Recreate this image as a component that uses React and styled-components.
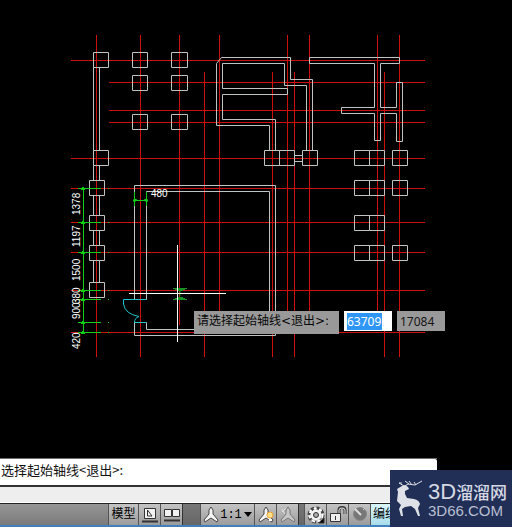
import React from 'react';
import styled, { createGlobalStyle, css } from 'styled-components';

const GlobalStyle = createGlobalStyle`
  * { box-sizing: border-box; }
  body { margin: 0; background: #000; }
`;

const Page = styled.main`
  position: relative;
  display: flex;
  flex-direction: column;
  min-height: 100vh;
  overflow: hidden;
  background: #000;
  font-family: "Noto Sans", "Noto Sans CJK SC", sans-serif;
`;

const Canvas = styled.section`
  position: relative;
  flex: 1;
`;

const Drawing = styled.svg`
  display: block;
  fill: none;
`;

const Axes = styled.path`
  stroke: #cc100d;
`;

const Walls = styled.path`
  stroke: #bfc3c1;
`;

const Dimension = styled.path`
  stroke: #12cf16;
`;

const Mark = styled.path`
  stroke: ${(p) => p.$color};
  fill: ${(p) => p.$fill || 'none'};
`;

const Crosshair = styled.path`
  stroke: #fff;
`;

const DimText = styled.text`
  fill: #fff;
  font: 10px "Liberation Sans Narrow", "Liberation Sans", sans-serif;
`;

const Prompt = styled.form`
  position: absolute;
  left: 194px;
  top: 311px;
  display: flex;
  align-items: flex-start;
  gap: 5px;
`;

const PromptLabel = styled.label`
  width: 145px;
  height: 23px;
  padding-left: 3px;
  background: #999;
  color: #080808;
  font: 12px/20px "DejaVu Sans", "Noto Sans CJK SC", sans-serif;
  white-space: nowrap;
`;

const CoordField = styled.div`
  display: flex;
  align-items: center;
  width: 48px;
  height: 20px;
  padding: 0 3px;
  background: ${(p) => (p.$active ? '#fff' : '#999')};
`;

const CoordInput = styled.input`
  width: ${(p) => (p.$active ? '35px' : '40px')};
  height: 17px;
  padding: 0;
  border: 0;
  outline: 0;
  background: ${(p) => (p.$active ? '#3096f5' : 'transparent')};
  color: ${(p) => (p.$active ? '#fff' : '#161616')};
  font: 12px/17px "Noto Sans", sans-serif;
`;

const CommandPanel = styled.section`
  width: 86%;
  max-width: 437px;
  border-top: 1px solid #6d6d6d;
`;

const CommandLine = styled.input`
  display: block;
  width: 100%;
  height: 26px;
  padding: 0 1px 5px;
  border: 0;
  outline: 0;
  border-radius: 0 2px 0 0;
  background: #fff;
  color: #111;
  font: 13px "Noto Sans CJK SC", sans-serif;
`;

const CommandStrip = styled.div`
  height: 18px;
  border-top: 2px solid #333;
  border-bottom: 1px solid #fff;
  background: #eee;
`;

const StatusBar = styled.nav`
  display: flex;
  height: 24px;
  padding-left: 108px;
  border-top: 1px solid #222;
  border-bottom: 2px solid #3f80bd;
  background: linear-gradient(#969696, #7a7a7a);
`;

const StatusGap = styled.span`
  width: ${(p) => p.$w}px;
  border-left: 1px solid #333;
  background: linear-gradient(#777, #666);
`;

const StatusButton = styled.button`
  display: flex;
  align-items: center;
  justify-content: center;
  flex: none;
  width: ${(p) => p.$w || 22}px;
  padding: 0;
  border: 0;
  border-left: 1px solid #555;
  background: linear-gradient(#c4c4c4, #9b9b9b);
  color: #000;
  font: 12px/20px "Liberation Mono", "Noto Sans CJK SC", monospace;
  white-space: nowrap;
  ${(p) => p.$lit && css`
    justify-content: flex-start;
    padding-left: 2px;
    overflow: hidden;
    background: linear-gradient(#d9f6fd, #a8dcea);
  `}
`;

const Brand = styled.aside`
  position: absolute;
  right: 0;
  bottom: 0;
  display: flex;
  align-items: center;
  width: 122px;
  height: 57px;
  padding-left: 6px;
  gap: 5px;
  background: #212f57;
  color: #d6d9e4;
`;

const BrandText = styled.div`
  display: flex;
  flex-direction: column;
  padding-top: 2px;
  white-space: nowrap;
`;

const BrandName = styled.div`
  display: flex;
  align-items: center;
  height: 22px;
  font: 500 17px/22px "Noto Sans CJK SC", sans-serif;
`;

const BrandLatin = styled.span`
  font: 22px/22px "Liberation Sans", sans-serif;
`;

const BrandSite = styled.div`
  font: 15px/16px "Liberation Sans", sans-serif;
  color: #b9bfd0;
`;

const longX = [96, 140, 399];
const shortX = [179, 219, 287, 309, 377];
const lowX = [204, 272, 294, 384];
const wideY = [60, 158, 188, 222, 252, 290, 332];
const innerY = [82, 110, 122];

const axes = [
  ...longX.map((x) => `M${x}.5 35V357`),
  ...shortX.map((x) => `M${x}.5 35V325`),
  ...lowX.map((x) => `M${x}.5 72V357`),
  ...wideY.map((y) => `M71 ${y}.5H425`),
  ...innerY.map((y) => `M109 ${y}.5H425`),
].join('');

const columns = [
  [93, 52], [132, 52], [171, 52], [132, 75], [171, 75], [132, 114], [171, 114],
  [93, 150], [89, 180], [89, 215], [89, 245], [89, 282],
  [264, 150], [279, 150], [302, 150],
  [354, 150], [369, 150], [392, 150], [354, 180], [369, 180], [392, 180],
  [354, 215], [369, 215], [354, 245], [369, 245], [392, 245],
].map(([x, y]) => `M${x} ${y}h${x === 171 ? 16 : 15}v15h-${x === 171 ? 16 : 15}z`).join('');

const leftWall = [[67, 150], [165, 180], [195, 215], [230, 245], [260, 282]]
  .map(([a, b]) => `M93 ${a}V${b}M99 ${a}V${b}`).join('');

const upperWalls =
  'M269 150V125H216V63L221 57H290V79H312V150' +
  'M275 150V119H222V94H287V88H222V63H284V85H306V150' +
  'M294 155H302M294 161H302' +
  'M374 63H309V57H399V63H380V107H396V82H402V141H396V113H380V140H374V113H341V107H374Z';

const room = 'M134 299V185H275V335H134V322H146V329H269V191H146V299H134';

const dimY = [188, 222, 252, 290, 299, 322, 332];
const dims = 'M83.5 187V333' +
  dimY.map((y) => `M78 ${y}.5H101M108 ${y}.5h1M82 ${y - 1}.5h2M81 ${y + 1}.5h4`).join('') +
  'M133 200.5H148M134.5 192V206M146.5 192V206';

const dimLabels = [
  ['1378', 215], ['1197', 247], ['1500', 281], ['380', 304], ['900', 319], ['420', 349],
];

const Icon = ({ children }) => (
  <svg width="18" height="18" viewBox="0 0 18 18" fill="none" stroke="#333" aria-hidden="true">{children}</svg>
);

const Person = ({ dim }) => (
  <path
    d="M9 1L7 4V8L2 14L3 16L9 12L15 16L16 14L11 8V4Z"
    fill={dim ? '#c8c8c8' : '#f5f5f5'}
    stroke={dim ? '#777' : '#444'}
  />
);

const Deer = () => (
  <svg width="27" height="38" viewBox="0 0 27 38" fill="#dfe1e8" aria-hidden="true">
    <path d="M1 9L6 6L9 5L12 7L13 9L9 11L9 14L11 18L18 19Q23 20 24 24L22 28L24 36H22L19 29L15 26L9 27L6 29L7 36H5L3 29L5 25L1 21L2 12Z" />
    <path d="M8 6L3 3L6 3M9 6L12 4L19 5L26 1M13 4L9 1M16 5L13 1M20 5L18 2" fill="none" stroke="#dfe1e8" />
  </svg>
);

function PlanDrawing() {
  return (
    <Drawing width="440" height="365" viewBox="0 0 440 365" role="img" aria-label="平面图">
      <Axes d={axes} />
      <g transform="translate(.5 .5)">
        <Walls d={columns + leftWall + upperWalls + room} />
      </g>
      <Dimension d={dims} />
      <Mark $color="#12cf16" $fill="#12cf16" d="M134 199l3 1-3 2zM147 199l-3 1 3 2z" />
      <Mark $color="#20c4cc" d="M146 299.5H123.5V304Q125 314 139 316.5Q134.5 318 134.5 322.5H146" />
      <Mark $color="#169526" d="M173 288.5H187M175 289.5H185M177 290.5H183M180 291V296M177 297.500H183M175 298.500H185M173 299.500H187" />
      <Crosshair d="M177.5 245V342M129 293.5H226" />
      {dimLabels.map(([t, y]) => (
        <DimText key={t} transform={`translate(80 ${y}) rotate(-90)`}>{t}</DimText>
      ))}
      <DimText x="151" y="197">480</DimText>
    </Drawing>
  );
}

export default function App() {
  return (
    <Page>
      <GlobalStyle />
      <Canvas>
        <PlanDrawing />
        <Prompt>
          <PromptLabel htmlFor="coord-x">请选择起始轴线&lt;退出&gt;:</PromptLabel>
          <CoordField $active>
            <CoordInput id="coord-x" $active defaultValue="63709" />
          </CoordField>
          <CoordField>
            <CoordInput aria-label="Y" defaultValue="17084" />
          </CoordField>
        </Prompt>
      </Canvas>
      <CommandPanel>
        <CommandLine aria-label="命令行" defaultValue="选择起始轴线<退出>:" />
        <CommandStrip />
        <StatusBar>
          <StatusButton $w={30}>模型</StatusButton>
          <StatusButton aria-label="模型空间">
            <Icon><path d="M3.5 2.5h11v10h-11z" fill="#f2f2f2" /><path d="M6.5 4v6H11Z" /><path d="M1 15.5h16" strokeWidth="2" /></Icon>
          </StatusButton>
          <StatusButton aria-label="布局">
            <Icon><path d="M1.5 3.5h7v7h-7zM9.5 3.5h7v7h-7z" fill="#f2f2f2" /><path d="M1 14.5h16" strokeWidth="2" /></Icon>
          </StatusButton>
          <StatusGap $w={18} />
          <StatusButton $w={54}>
            <Icon><Person /></Icon>
            1:1
            <svg width="11" height="8" viewBox="0 0 11 8" aria-hidden="true"><path d="M2 1h8L6 6z" /></svg>
          </StatusButton>
          <StatusButton aria-label="注释可见性">
            <Icon><Person /><circle cx="13" cy="9" r="3" fill="#ffdf8a" stroke="#eda532" /><path d="M12 14h3" stroke="#fff" strokeWidth="2" /></Icon>
          </StatusButton>
          <StatusButton aria-label="自动缩放">
            <Icon><Person dim /><path d="M3 6l4-4M3 3l3 5" stroke="#ddd" /></Icon>
          </StatusButton>
          <StatusGap $w={6} />
          <StatusButton aria-label="工作空间">
            <Icon>
              <circle cx="9" cy="9" r="7" stroke="#444" strokeWidth="3" strokeDasharray="3.500 2" />
              <circle cx="9" cy="9" r="6.500" stroke="#fff" strokeWidth="2" strokeDasharray="3 2.500" />
              <circle cx="9" cy="9" r="5" fill="#f4f4f4" stroke="#f4f4f4" />
              <circle cx="9" cy="9" r="2.500" fill="#aaa" />
              <path d="M17 12v5h-5z" fill="#000" />
            </Icon>
          </StatusButton>
          <StatusButton aria-label="锁定">
            <Icon>
              <path d="M10 8V4Q10 1.500 13 1.500T16 4V8" strokeWidth="3" />
              <path d="M10 8V4Q10 2 13 2T16 4V8" stroke="#eee" />
              <path d="M1.500 7.500h10v8h-10z" fill="#eee" /><path d="M6.500 10v4" />
            </Icon>
          </StatusButton>
          <StatusButton aria-label="硬件加速">
            <Icon><circle cx="9" cy="8" r="6.500" fill="#777" stroke="#888" /><path d="M4 3l6 6" stroke="#ddd" strokeWidth="2" /><path d="M12 4l2-2" stroke="#ccc" /></Icon>
          </StatusButton>
          <StatusButton $w={66} $lit>编组</StatusButton>
        </StatusBar>
      </CommandPanel>
      <Brand>
        <Deer />
        <BrandText>
          <BrandName><BrandLatin>3D</BrandLatin>溜溜网</BrandName>
          <BrandSite>3D66.COM</BrandSite>
        </BrandText>
      </Brand>
    </Page>
  );
}
